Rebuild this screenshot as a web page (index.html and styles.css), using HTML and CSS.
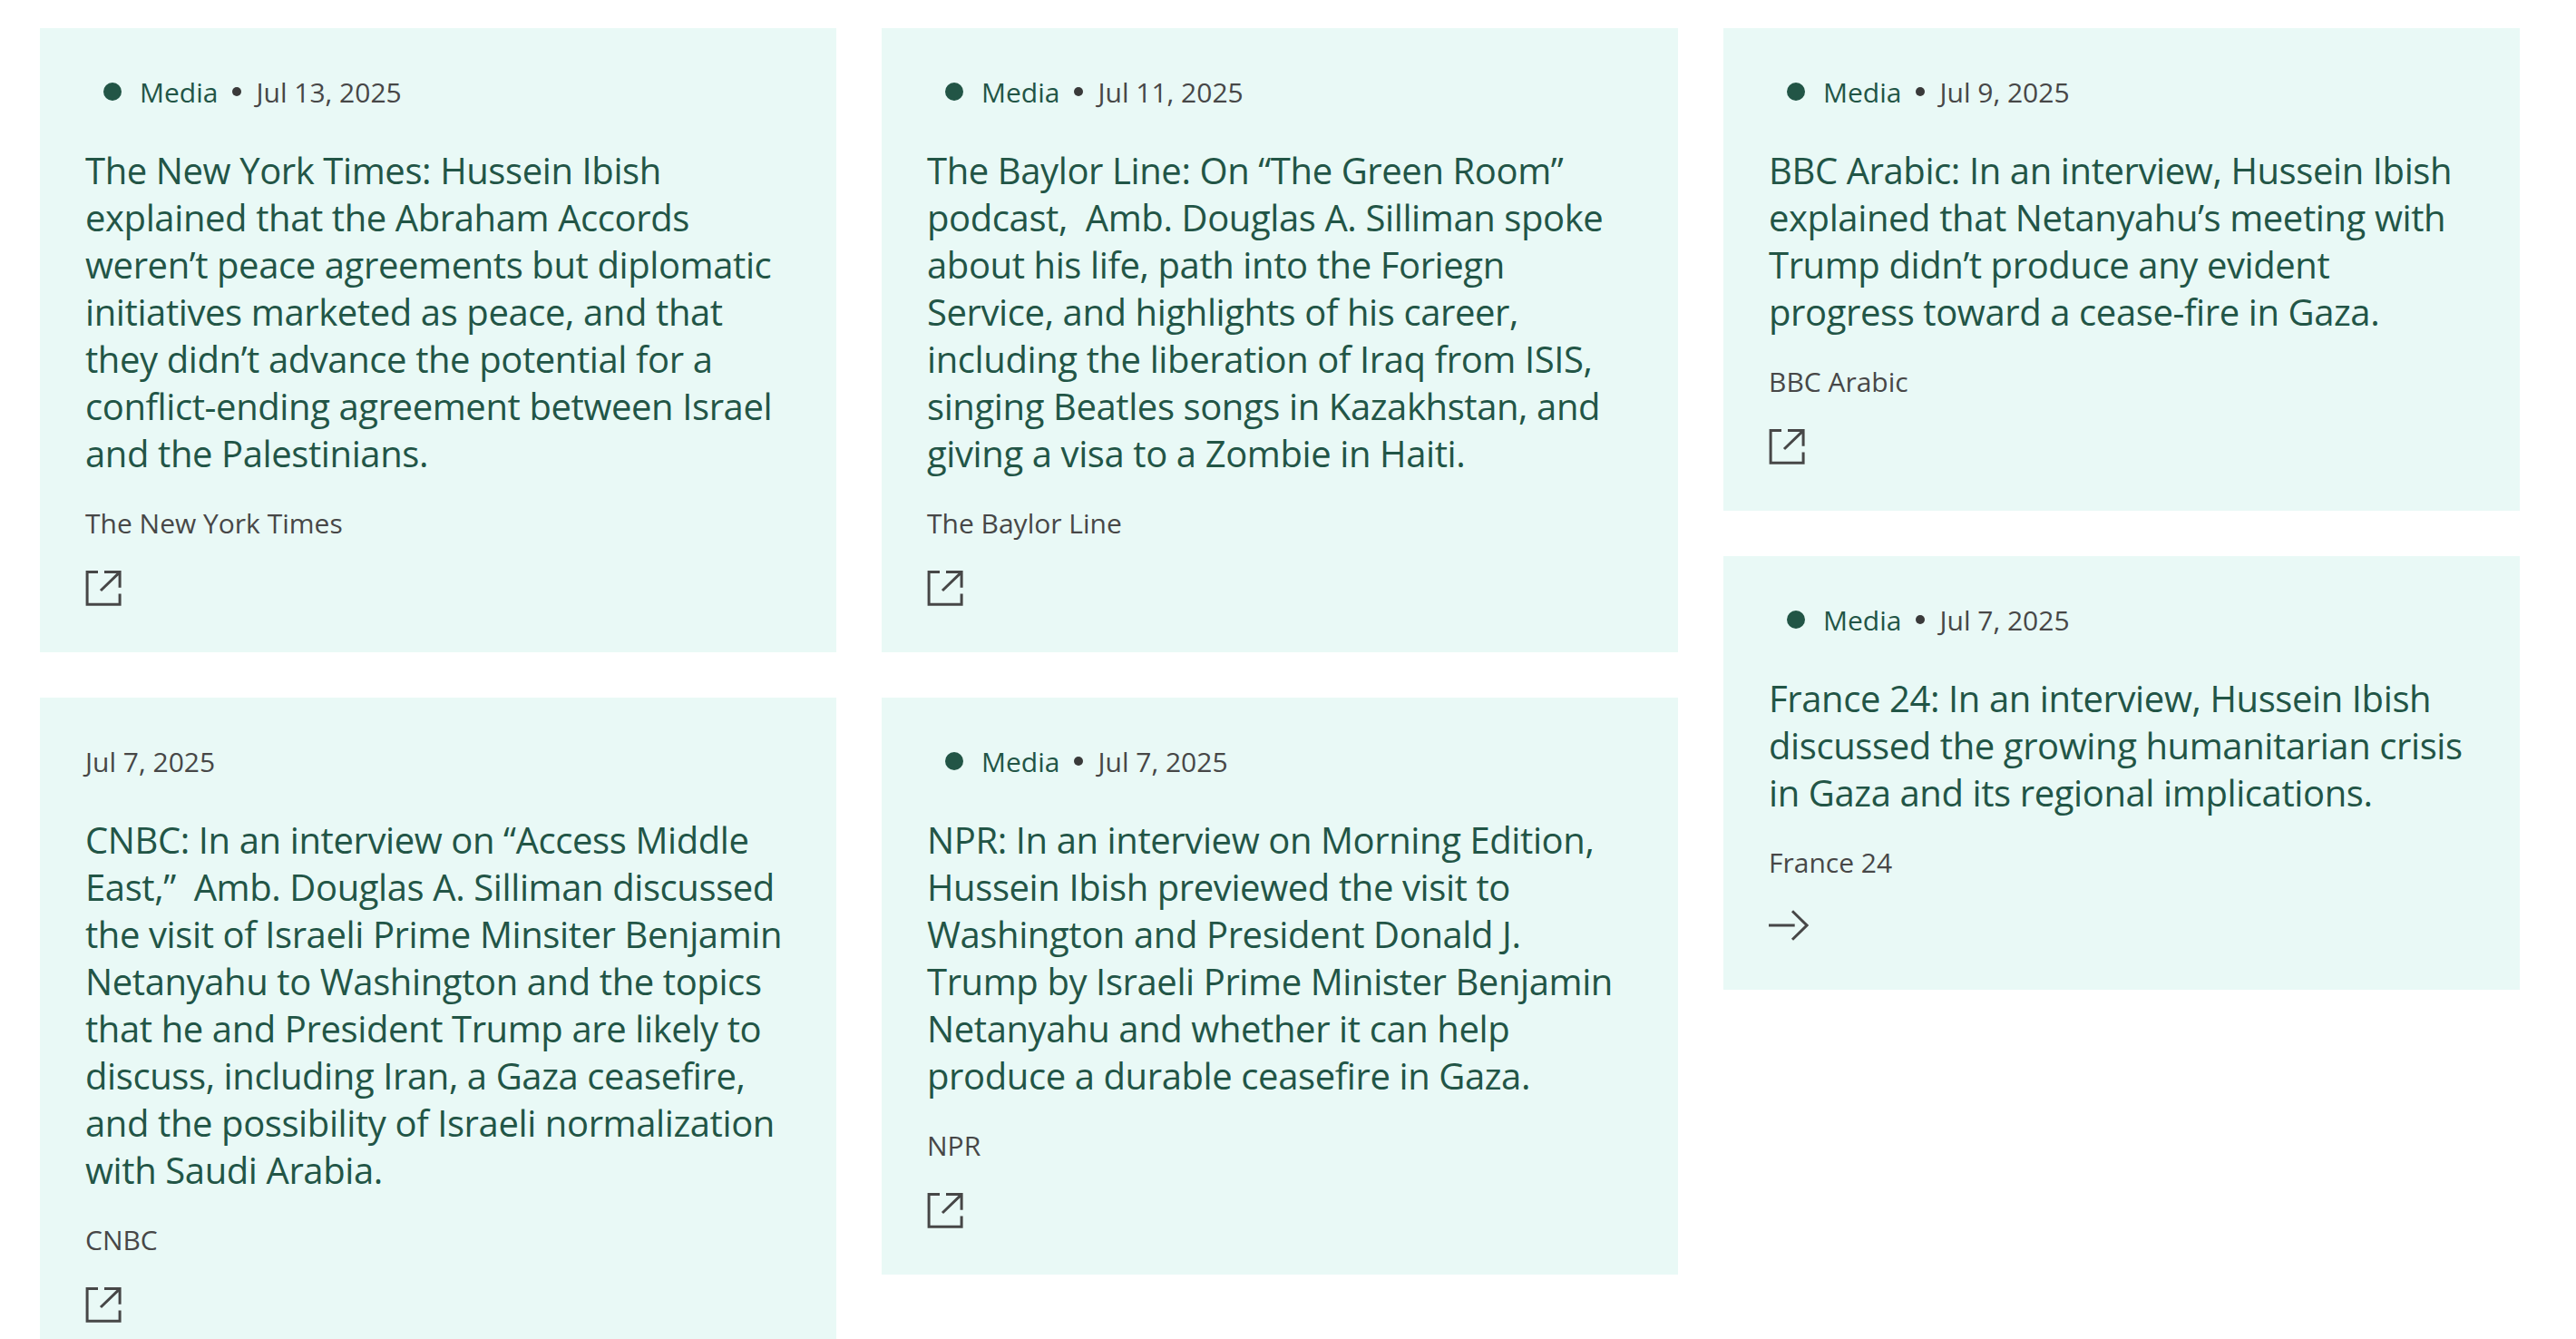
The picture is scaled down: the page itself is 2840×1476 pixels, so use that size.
FILE: index.html
```html
<!DOCTYPE html>
<html lang="en">
  <head>
    <meta charset="UTF-8" />
    <meta name="viewport" content="width=device-width, initial-scale=1.0" />
    <title>In the Media</title>
    <link rel="stylesheet" href="styles.css">
  </head>
  <body>
    <!-- icons shared by the cards -->
    <svg class="icon-defs" width="0" height="0">
      <symbol id="icon-external" viewBox="0 0 40 40">
        <path d="M14 1.5H2.1V37.3H38.1V25.4M21 1.5H38.1V18.7M17 22L37.6 2.2" />
      </symbol>
      <symbol id="icon-arrow" viewBox="0 0 44 38">
        <path d="M0 17H28.7M26 1.3L42 17L26 32.8" />
      </symbol>
    </svg>

    <main class="media-grid">
      <div class="media-column">
        <article class="card">
          <div class="card-meta">
            <a class="card-type">Media</a>
            <span class="card-date">Jul 13, 2025</span>
          </div>
          <h3 class="card-title">The New York Times: Hussein Ibish explained that the Abraham Accords weren’t peace agreements but diplomatic initiatives marketed as peace, and that they didn’t advance the potential for a conflict-ending agreement between Israel and the Palestinians.</h3>
          <p class="card-source">The New York Times</p>
          <svg class="icon-external"><use href="#icon-external" /></svg>
        </article>

        <article class="card">
          <div class="card-meta">
            <span class="card-date">Jul 7, 2025</span>
          </div>
          <h3 class="card-title">CNBC: In an interview on “Access Middle East,”&nbsp; Amb. Douglas A. Silliman discussed the visit of Israeli Prime Minsiter Benjamin Netanyahu to Washington and the topics that he and President Trump are likely to discuss, including Iran, a Gaza ceasefire, and the possibility of Israeli normalization with Saudi Arabia.</h3>
          <p class="card-source">CNBC</p>
          <svg class="icon-external"><use href="#icon-external" /></svg>
        </article>
      </div>

      <div class="media-column">
        <article class="card">
          <div class="card-meta">
            <a class="card-type">Media</a>
            <span class="card-date">Jul 11, 2025</span>
          </div>
          <h3 class="card-title">The Baylor Line: On “The Green Room” podcast,&nbsp; Amb. Douglas A. Silliman spoke about his life, path into the Foriegn Service, and highlights of his career, including the liberation of Iraq from ISIS, singing Beatles songs in Kazakhstan, and giving a visa to a Zombie in Haiti.</h3>
          <p class="card-source">The Baylor Line</p>
          <svg class="icon-external"><use href="#icon-external" /></svg>
        </article>

        <article class="card">
          <div class="card-meta">
            <a class="card-type">Media</a>
            <span class="card-date">Jul 7, 2025</span>
          </div>
          <h3 class="card-title">NPR: In an interview on Morning Edition, Hussein Ibish previewed the visit to Washington and President Donald J. Trump by Israeli Prime Minister Benjamin Netanyahu and whether it can help produce a durable ceasefire in Gaza.</h3>
          <p class="card-source">NPR</p>
          <svg class="icon-external"><use href="#icon-external" /></svg>
        </article>
      </div>

      <div class="media-column">
        <article class="card">
          <div class="card-meta">
            <a class="card-type">Media</a>
            <span class="card-date">Jul 9, 2025</span>
          </div>
          <h3 class="card-title">BBC Arabic: In an interview, Hussein Ibish explained that Netanyahu’s meeting with Trump didn’t produce any evident progress toward a cease-fire in Gaza.</h3>
          <p class="card-source">BBC Arabic</p>
          <svg class="icon-external"><use href="#icon-external" /></svg>
        </article>

        <article class="card">
          <div class="card-meta">
            <a class="card-type">Media</a>
            <span class="card-date">Jul 7, 2025</span>
          </div>
          <h3 class="card-title">France 24: In an interview, Hussein Ibish discussed the growing humanitarian crisis in Gaza and its regional implications.</h3>
          <p class="card-source">France 24</p>
          <svg class="icon-arrow"><use href="#icon-arrow" /></svg>
        </article>
      </div>
    </main>
  </body>
</html>
```

FILE: styles.css
```css
* {
  box-sizing: border-box;
}

html {
  overflow: hidden;
}

body {
  margin: 0;
  height: 1476px;
  overflow: hidden;
  background: #fff;
  color: #474747;
  font-family: "Open Sans", sans-serif;
  font-size: 30px;
  line-height: 41px;
}

.icon-defs {
  display: block;
}

.media-grid {
  display: grid;
  grid-template-columns: repeat(3, 878px);
  gap: 50px;
  align-items: start;
  padding: 31px 44px 0;
}

.media-column {
  display: flex;
  flex-direction: column;
  gap: 50px;
}

.card {
  padding: 50px;
  background: #e9f9f6;
}

.card-meta {
  display: flex;
  align-items: center;
  margin-bottom: 40px;
}

.card-type {
  display: flex;
  align-items: center;
  color: #225546;
}

.card-type::before {
  content: "";
  width: 20px;
  height: 20px;
  margin: 0 20px 1px;
  border-radius: 50%;
  background: #225546;
}

.card-type::after {
  content: "";
  width: 10px;
  height: 10px;
  margin: 0 16px 1px;
  border-radius: 50%;
  background: #3a3a3a;
}

.card-title {
  margin: 0 0 30px;
  color: #225546;
  font-size: 40px;
  font-weight: 400;
  line-height: 52px;
  letter-spacing: -0.01em;
}

.card-source {
  margin: 0 0 32px;
}

.icon-external,
.icon-arrow {
  display: block;
  fill: none;
  stroke: #474747;
  stroke-width: 3;
}

.icon-external {
  width: 40px;
  height: 40px;
}

.icon-arrow {
  width: 44px;
  height: 38px;
}
```
